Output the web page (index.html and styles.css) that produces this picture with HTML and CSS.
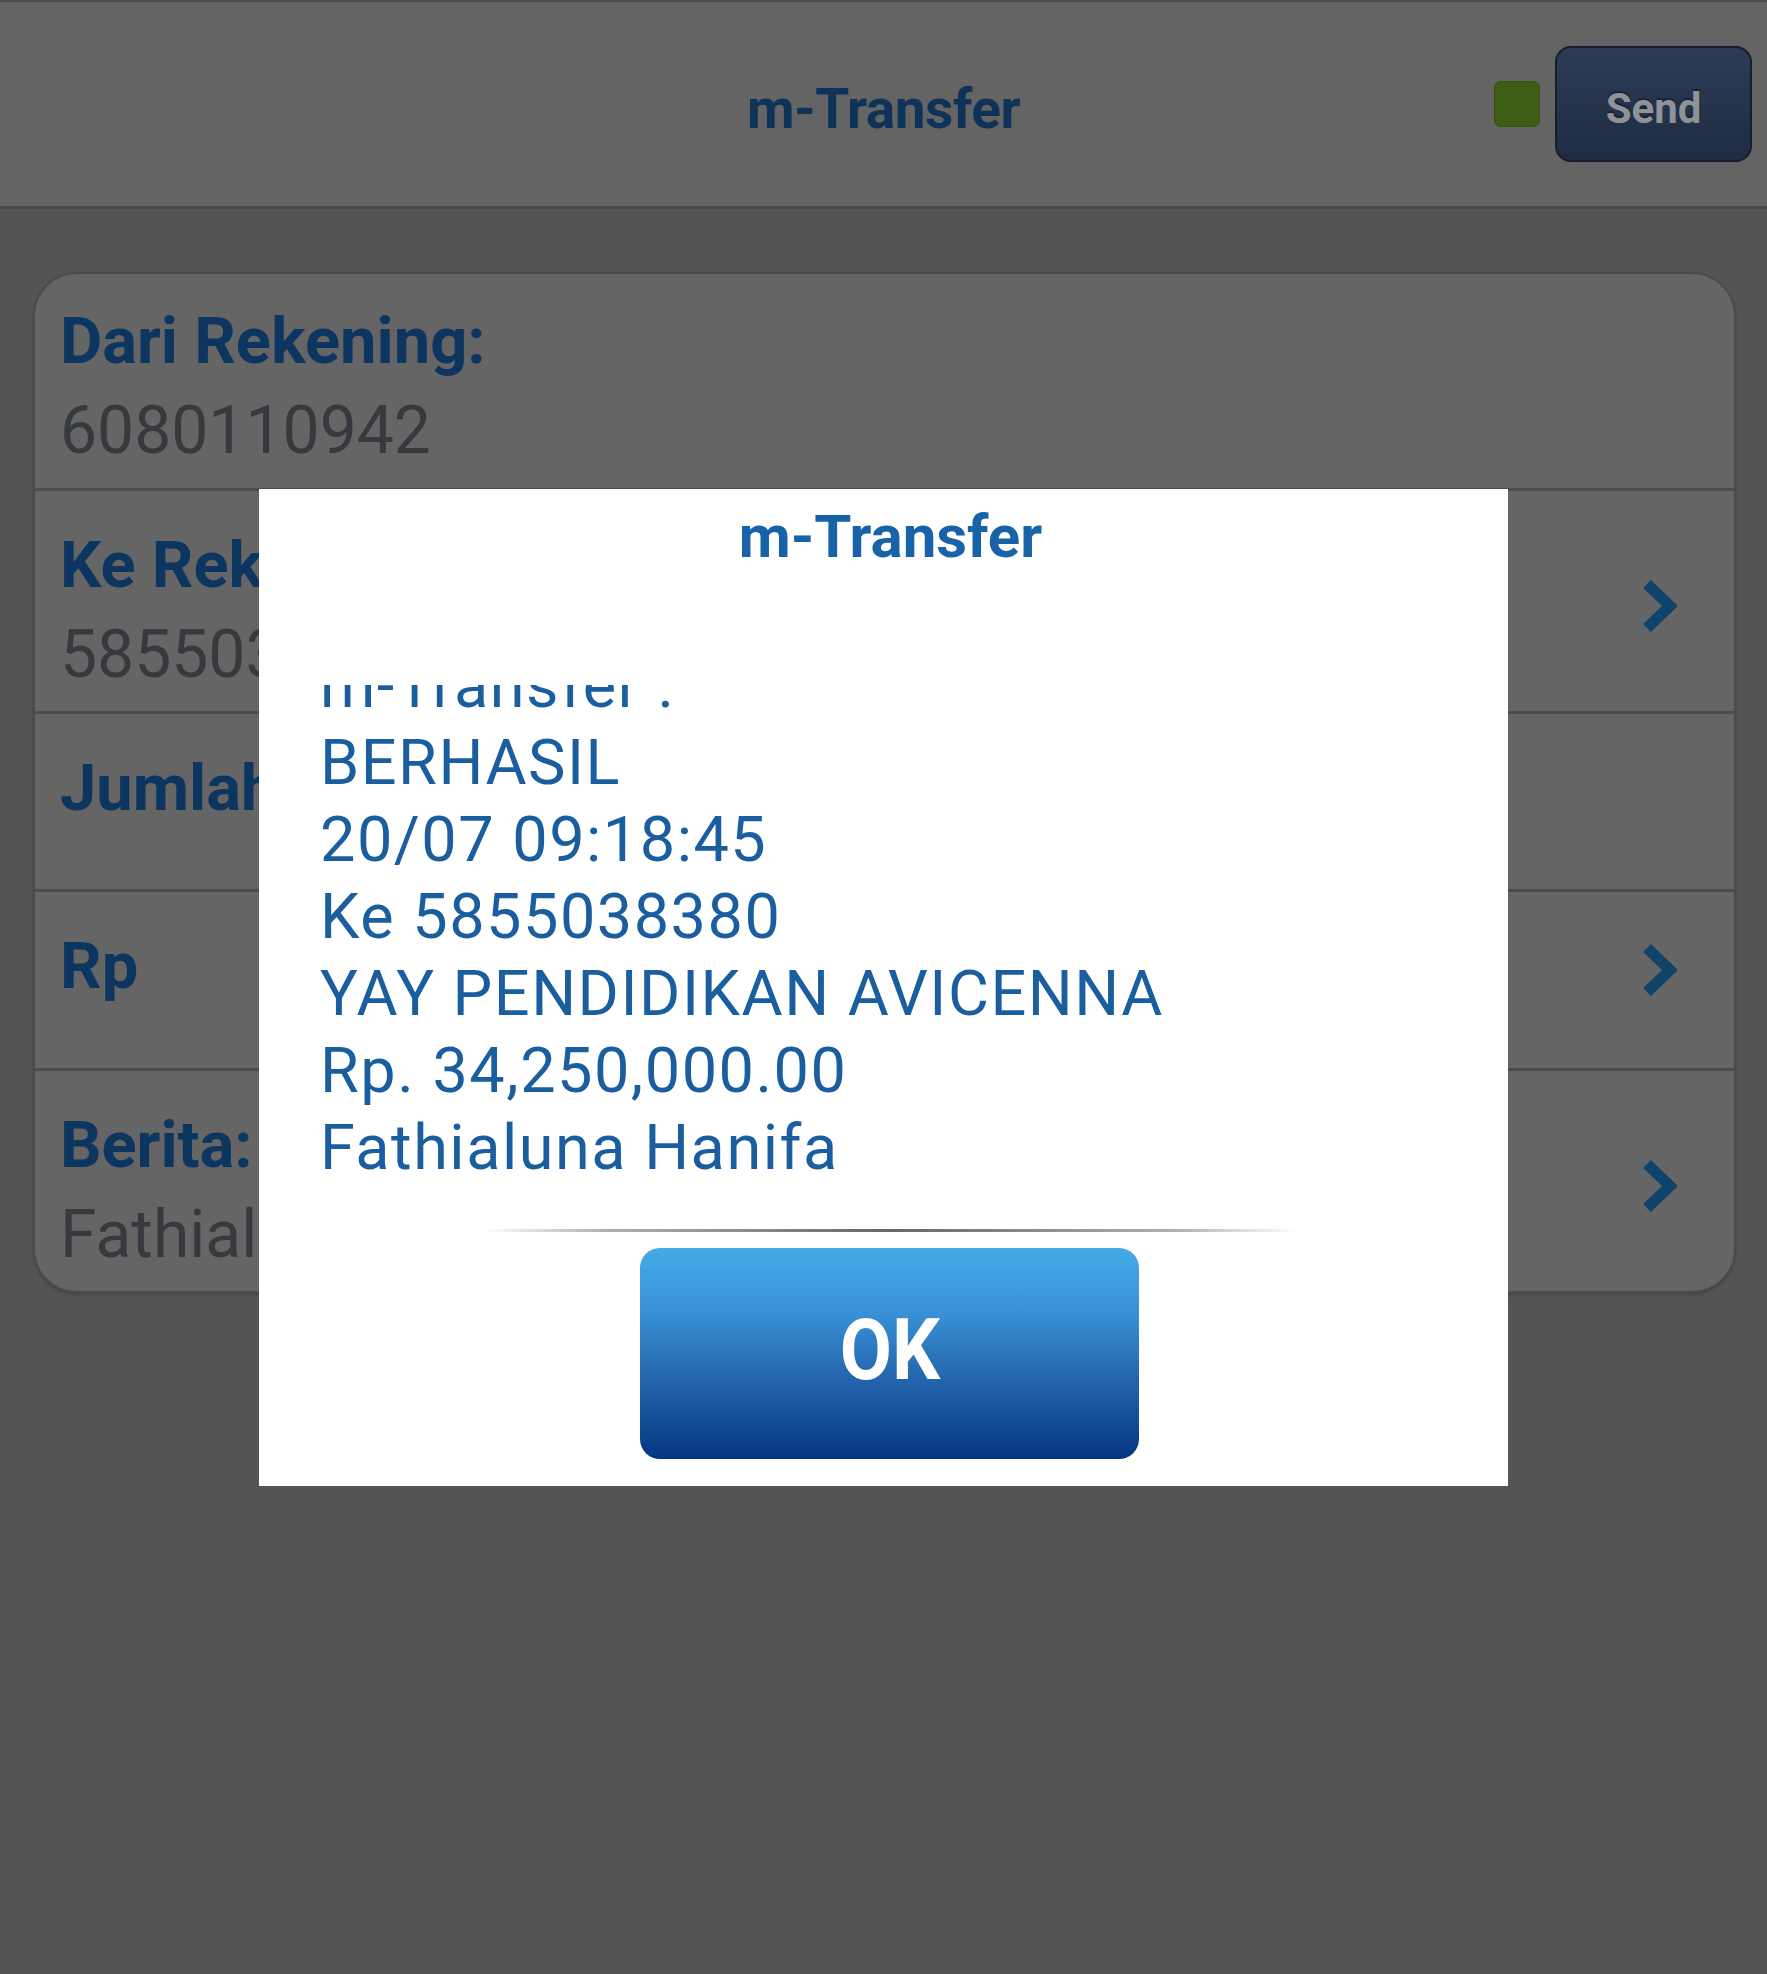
FILE: index.html
```html
<!DOCTYPE html>
<html lang="id">
<head>
<meta charset="utf-8">
<title>m-Transfer</title>
<link rel="stylesheet" href="styles.css">
</head>
<body>
<div class="app">
  <header class="topbar">
    <div class="topbar-side"></div>
    <h1 class="topbar-title">m-Transfer</h1>
    <div class="topbar-side topbar-actions">
      <span class="status-dot"></span>
      <button class="send-btn" type="button">Send</button>
    </div>
  </header>

  <main class="content">
    <section class="card">
      <div class="row row-first">
        <div class="field">
          <div class="label">Dari Rekening:</div>
          <div class="value">6080110942</div>
        </div>
      </div>
      <div class="row row-two">
        <div class="field">
          <div class="label">Ke Rekening:</div>
          <div class="value">5855038380</div>
        </div>
        <svg class="chevron" viewBox="0 0 36 54" aria-hidden="true"><polyline points="6,5 29,27 6,49"/></svg>
      </div>
      <div class="row row-three">
        <div class="field">
          <div class="label">Jumlah Transfer:</div>
        </div>
      </div>
      <div class="row row-four">
        <div class="field">
          <div class="label">Rp</div>
        </div>
        <svg class="chevron chevron-up" viewBox="0 0 36 54" aria-hidden="true"><polyline points="6,5 29,27 6,49"/></svg>
      </div>
      <div class="row row-five">
        <div class="field">
          <div class="label">Berita:</div>
          <div class="value">Fathialuna Hanifa</div>
        </div>
        <svg class="chevron" viewBox="0 0 36 54" aria-hidden="true"><polyline points="6,5 29,27 6,49"/></svg>
      </div>
    </section>
  </main>

  <div class="overlay">
    <div class="dialog" role="dialog">
      <h2 class="dialog-title">m-Transfer</h2>
      <div class="dialog-message">
        <div class="message-lines">
          <div class="line">m-Transfer :</div>
          <div class="line">BERHASIL</div>
          <div class="line">20/07 09:18:45</div>
          <div class="line">Ke 5855038380</div>
          <div class="line">YAY PENDIDIKAN AVICENNA</div>
          <div class="line">Rp. 34,250,000.00</div>
          <div class="line">Fathialuna Hanifa</div>
        </div>
      </div>
      <div class="dialog-divider"></div>
      <button class="ok-btn" type="button"><span class="ok-text">OK</span></button>
    </div>
  </div>
</div>
</body>
</html>
```

FILE: styles.css
```css
* { box-sizing: border-box; }

html, body {
  margin: 0;
  padding: 0;
}

body {
  width: 1767px;
  height: 1974px;
  background: #545454;
  font-family: Roboto, "Liberation Sans", Arial, sans-serif;
  overflow: hidden;
}

.app {
  position: relative;
  width: 1767px;
  height: 1974px;
}

/* ---------- top bar ---------- */
.topbar {
  height: 209px;
  background: #646464;
  border-top: 2px solid #4e4e4e;
  border-bottom: 3px solid #4a4a4a;
  display: grid;
  grid-template-columns: 1fr auto 1fr;
  align-items: center;
  padding-top: 4px;
}

.topbar-title {
  margin: 0;
  padding-top: 5px;
  font-size: 55px;
  font-weight: 700;
  color: #0f3358;
  letter-spacing: -0.5px;
}

.topbar-actions {
  display: flex;
  justify-content: flex-end;
  align-items: center;
  gap: 15px;
  padding-right: 15px;
  margin-top: -4px;
}

.status-dot {
  width: 46px;
  height: 46px;
  border-radius: 7px;
  background: #3f5e14;
  box-shadow: inset 0 0 0 1px #365212;
}

.send-btn {
  width: 197px;
  height: 116px;
  border-radius: 16px;
  border: 2px solid #151e2c;
  background: linear-gradient(#2c3c56, #1f2c42);
  color: #8f9399;
  font-family: Roboto, "Liberation Sans", Arial, sans-serif;
  font-size: 42px;
  font-weight: 700;
  text-shadow: 0 -2px 1px #1a2232;
  padding: 8px 0 0 0;
}

/* ---------- form card ---------- */
.content {
  padding: 63px 31px 0 33px;
}

.card {
  background: #656565;
  border: 2px solid #4b4b4b;
  border-radius: 44px;
  box-shadow: 0 2px 3px rgba(0, 0, 0, 0.18);
  overflow: hidden;
}

.row {
  display: flex;
  align-items: center;
  padding: 29px 57px 0 25px;
  border-top: 3px solid #4c4c4c;
}

.row .field {
  align-self: flex-start;
  flex: 1;
}

.row-first {
  border-top: none;
  height: 214px;
  padding-top: 22px;
}

.row-two { height: 223px; }
.row-three { height: 178px; }
.row-four { height: 179px; }
.row-five { height: 223px; }

.label {
  font-size: 65px;
  line-height: 90px;
  font-weight: 700;
  color: #0c3560;
  letter-spacing: 0;
  white-space: nowrap;
}

.value {
  font-size: 66px;
  line-height: 90px;
  font-weight: 400;
  color: #36393d;
  white-space: nowrap;
}

.chevron {
  width: 36px;
  height: 54px;
  margin-top: -19px;
  flex: none;
}

.chevron-up {
  margin-top: -49px;
}

.chevron polyline {
  fill: none;
  stroke: #10436a;
  stroke-width: 11;
  stroke-linejoin: miter;
}

/* ---------- dialog ---------- */
.overlay {
  position: absolute;
  inset: 0;
  display: flex;
  align-items: center;
  justify-content: center;
}

.dialog {
  width: 1249px;
  height: 997px;
  background: #ffffff;
  display: flex;
  flex-direction: column;
  align-items: center;
}

.dialog-title {
  margin: 0 0 0 14px;
  padding-top: 8px;
  height: 88px;
  font-size: 60px;
  line-height: 80px;
  font-weight: 700;
  color: #1863a8;
}

.dialog-message {
  align-self: stretch;
  margin-top: 108px;
  height: 524px;
  overflow: hidden;
  padding-left: 61px;
}

.message-lines {
  margin-top: -38px;
}

.line {
  font-size: 63px;
  line-height: 77px;
  letter-spacing: 1.5px;
  color: #1b5e9f;
  white-space: nowrap;
}

.dialog-divider {
  width: 815px;
  height: 3px;
  margin: 20px 0 0 12px;
  background: linear-gradient(90deg, rgba(120,120,120,0) 0%, #b0b0b0 15%, #666666 50%, #b0b0b0 85%, rgba(120,120,120,0) 100%);
}

.ok-btn {
  margin: 16px 0 0 12px;
  width: 499px;
  height: 211px;
  border: none;
  border-radius: 20px;
  background: linear-gradient(#44aae8 0%, #3a92d6 30%, #2468b0 60%, #053580 100%);
  color: #ffffff;
  font-family: Roboto, "Liberation Sans", Arial, sans-serif;
  font-size: 86px;
  font-weight: 700;
  padding: 0 0 8px 0;
}

.ok-text {
  display: inline-block;
  transform: scaleX(0.88);
}
```
